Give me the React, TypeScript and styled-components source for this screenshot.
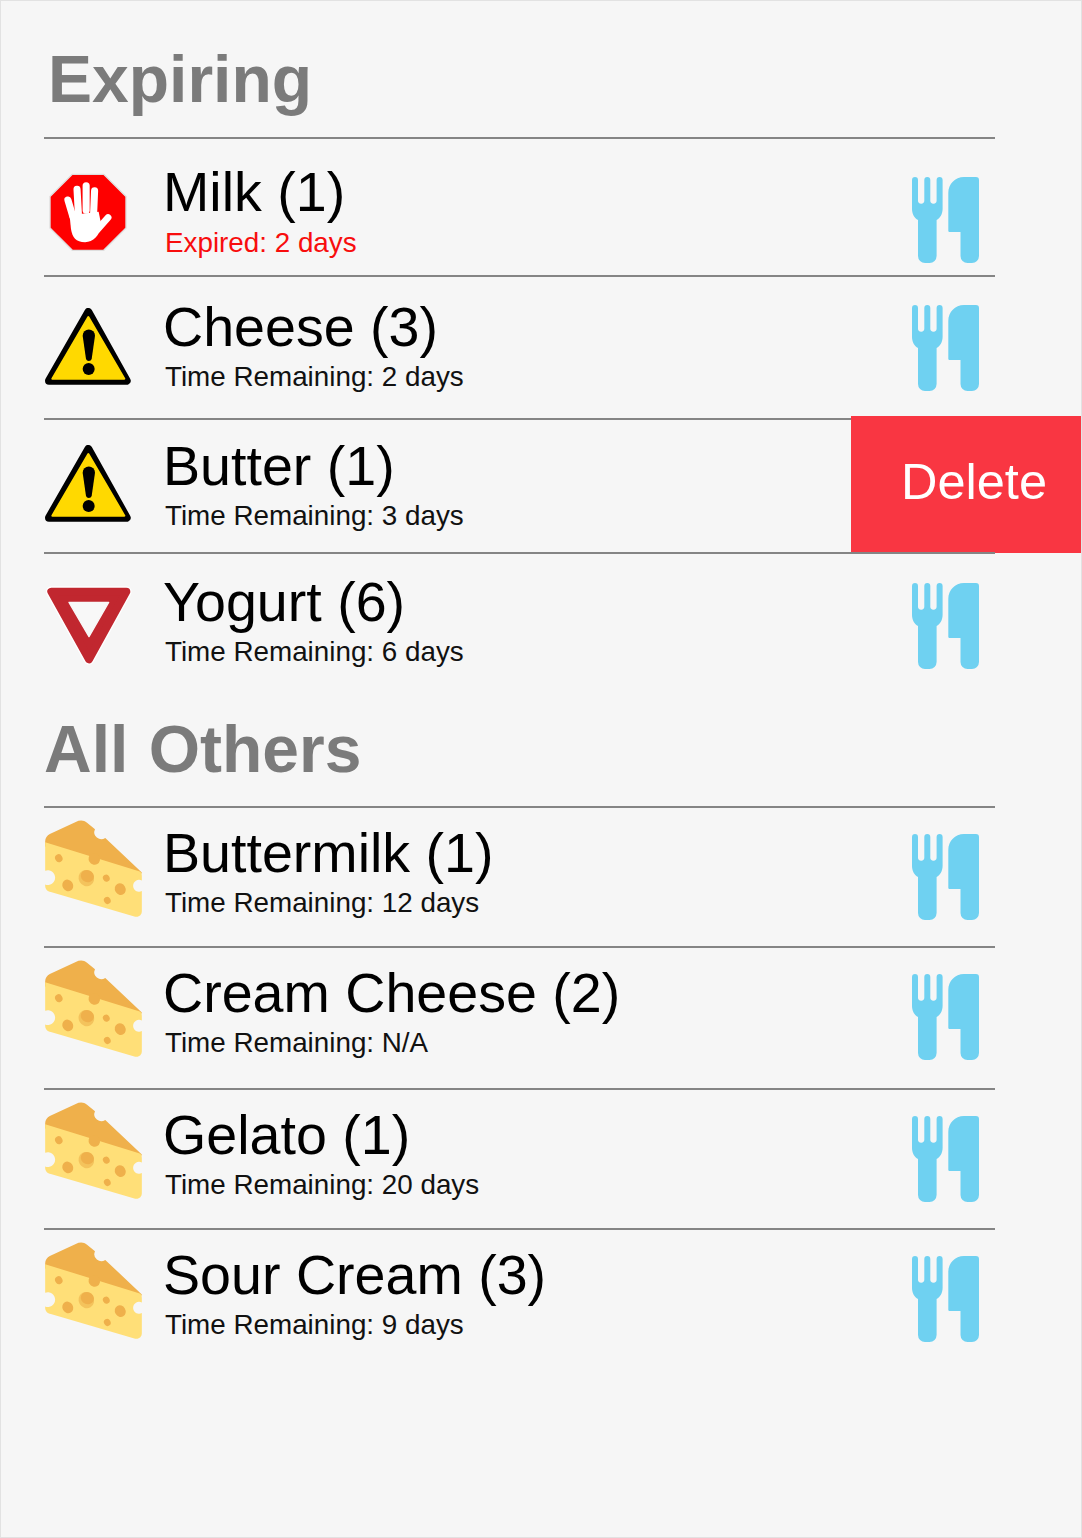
import { FC } from 'react'
import styled, { createGlobalStyle } from 'styled-components'

const GlobalStyle = createGlobalStyle`
  html, body {
    margin: 0;
    padding: 0;
    background: #f6f6f6;
  }
  * {
    box-sizing: border-box;
  }
`

const Page = styled.div`
  width: 1082px;
  height: 1538px;
  padding-left: 44px;
  background: #f6f6f6;
  border: 1px solid #e2e2e2;
  font-family: 'Liberation Sans', Arial, sans-serif;
  overflow: hidden;
`

const List = styled.div`
  width: 951px;
  margin-left: -1px;
`

const Heading = styled.h2<{ $height: number; $indent: number; $shift: number }>`
  height: ${(p) => p.$height}px;
  margin: 0;
  padding-left: ${(p) => p.$indent}px;
  padding-top: ${(p) => Math.max(p.$shift, 0)}px;
  padding-bottom: ${(p) => Math.max(-p.$shift, 0)}px;
  display: flex;
  align-items: center;
  font-size: 66px;
  font-weight: bold;
  word-spacing: 2px;
  color: #7b7b7b;
`

const Row = styled.div<{ $height: number }>`
  position: relative;
  height: ${(p) => p.$height}px;
  display: grid;
  grid-template-columns: 119px 1fr auto;
  padding-right: 15px;
  border-top: 2px solid #858585;
`

const IconSlot = styled.div<{ $top: number; $left: number }>`
  margin-top: ${(p) => p.$top}px;
  margin-left: ${(p) => p.$left}px;
`

const Texts = styled.div<{ $top: number }>`
  margin-top: ${(p) => p.$top}px;
`

const Name = styled.div`
  font-size: 55.6px;
  line-height: 66px;
  color: #000;
`

const Detail = styled.div<{ $expired?: boolean }>`
  padding-left: 2px;
  padding-top: ${(p) => (p.$expired ? 2 : 1)}px;
  font-size: 27.8px;
  line-height: 32px;
  color: ${(p) => (p.$expired ? '#f80d0d' : '#111')};
`

const Tool = styled.div<{ $top: number }>`
  margin-top: ${(p) => p.$top}px;
`

const DeleteButton = styled.button`
  position: absolute;
  top: -4px;
  left: 807px;
  width: 230px;
  height: 137px;
  border: 0;
  padding: 0 0 6px 16px;
  background: #f93642;
  color: #fff;
  font-family: inherit;
  font-size: 50.5px;
  text-align: center;
`

const Utensils: FC = () => (
  <svg width="68" height="86" viewBox="0 0 68 86" fill="#6fd1f1">
    <path d="M0 3a3 3 0 0 1 6 0v20.500a3 3 0 0 0 6.300 0V3a3 3 0 0 1 6 0v20.500a3 3 0 0 0 6.300 0V3a3 3 0 0 1 6 0v29c0 5-2.500 9-6 11v36a7 7 0 0 1-7 7H13a7 7 0 0 1-7-7V43c-3.500-2-6-6-6-11z" />
    <path d="M52 0h12a3 3 0 0 1 3 3v76a7 7 0 0 1-7 7h-4.500a7 7 0 0 1-7-7V55H37.500a1.200 1.200 0 0 1-1.200-1.200V16C36.300 7 43 0 52 0z" />
  </svg>
)

const StopIcon: FC = () => (
  <svg width="78" height="78" viewBox="58 40 231 231">
    <path d="M127 44h93l66 66v93l-66 66h-93l-66-66v-93z" fill="#fe0000" stroke="#dedede" strokeWidth="4" />
    <g stroke="#fff" strokeLinecap="round" fill="none">
      <path d="M114 120l15 50" strokeWidth="21" />
      <path d="M141 88l4 72" strokeWidth="21" />
      <path d="M168 78v72" strokeWidth="21" />
      <path d="M193 93l-3 70" strokeWidth="21" />
      <path d="M233 172l-32 36" strokeWidth="20" />
    </g>
    <path d="M119 165l86-10 8 40c-4 30-25 50-48 50-28 0-38-15-42-40z" fill="#fff" />
  </svg>
)

const WarningIcon: FC = () => (
  <svg width="86" height="80" viewBox="45 445 258 240">
    <path d="M175 457L290 663H57z" fill="#000" stroke="#000" strokeWidth="24" strokeLinejoin="round" />
    <path d="M175 472L283 657H67z" fill="#ffd900" stroke="#ffd900" strokeWidth="6" strokeLinejoin="round" />
    <path d="M158 528a18 18 0 0 1 37 0l-10 70a9 9 0 0 1-17 0z" />
    <circle cx="176" cy="628" r="18" />
  </svg>
)

const YieldIcon: FC = () => (
  <svg width="88" height="80" viewBox="43 50 264 240">
    <path d="M65 67H290L178 270z" fill="#fff" stroke="#fff" strokeWidth="32" strokeLinejoin="round" />
    <path d="M65 67H290L178 270z" fill="#c1272f" stroke="#c1272f" strokeWidth="24" strokeLinejoin="round" />
    <path d="M118 99H237L178 202z" fill="#f8f8f8" stroke="#f8f8f8" strokeWidth="4" strokeLinejoin="round" />
  </svg>
)

const CheeseIcon: FC = () => (
  <svg width="97" height="97" viewBox="45 28 291 292">
    <path d="M45 92c0-10 6-18 14-22l78-36c12-6 24-6 34 2l24 20a21 21 0 0 0 31 26l110 104-6 12-285-90z" fill="#efb04b" />
    <path d="M45 95l285 88c4 2 6 6 6 14v13a18 18 0 1 0 0 32v60c0 12-8 19-20 17L62 245c-10-3-17-8-17-20v-3a22 22 0 1 0 0-41z" fill="#ffdf78" />
    <g fill="#efb04b">
      <ellipse cx="193" cy="145" rx="17" ry="18" transform="rotate(-30 193 145)" />
      <ellipse cx="86" cy="143" rx="11" ry="12" transform="rotate(-30 86 143)" />
      <ellipse cx="113" cy="225" rx="16" ry="18" transform="rotate(-30 113 225)" />
      <ellipse cx="229" cy="203" rx="10" ry="11" transform="rotate(-30 229 203)" />
      <ellipse cx="271" cy="236" rx="16" ry="18" transform="rotate(-30 271 236)" />
      <ellipse cx="232" cy="270" rx="10" ry="11" transform="rotate(-30 232 270)" />
    </g>
    <ellipse cx="169" cy="203" rx="23" ry="25" fill="#f4c35c" transform="rotate(-30 169 203)" />
    <ellipse cx="172" cy="197" rx="20" ry="18" fill="#efb04b" transform="rotate(20 172 197)" />
  </svg>
)

type Item = {
  name: string
  detail: string
  expired?: boolean
  icon: FC
  height: number
  iconTop: number
  iconLeft: number
  textTop: number
  toolTop?: number
  deleting?: boolean
}

const expiring: Item[] = [
  { name: 'Milk (1)', detail: 'Expired: 2 days', expired: true, icon: StopIcon, height: 138, iconTop: 34, iconLeft: 5, textTop: 20, toolTop: 38 },
  { name: 'Cheese (3)', detail: 'Time Remaining: 2 days', icon: WarningIcon, height: 143, iconTop: 31, iconLeft: 1, textTop: 17, toolTop: 28 },
  { name: 'Butter (1)', detail: 'Time Remaining: 3 days', icon: WarningIcon, height: 134, iconTop: 25, iconLeft: 1, textTop: 13, deleting: true },
  { name: 'Yogurt (6)', detail: 'Time Remaining: 6 days', icon: YieldIcon, height: 149, iconTop: 32, iconLeft: 0, textTop: 15, toolTop: 29 },
]

const others: Item[] = [
  { name: 'Buttermilk (1)', detail: 'Time Remaining: 12 days', icon: CheeseIcon, height: 140, iconTop: 12, iconLeft: 1, textTop: 12, toolTop: 26 },
  { name: 'Cream Cheese (2)', detail: 'Time Remaining: N/A', icon: CheeseIcon, height: 142, iconTop: 12, iconLeft: 1, textTop: 12, toolTop: 26 },
  { name: 'Gelato (1)', detail: 'Time Remaining: 20 days', icon: CheeseIcon, height: 140, iconTop: 12, iconLeft: 1, textTop: 12, toolTop: 26 },
  { name: 'Sour Cream (3)', detail: 'Time Remaining: 9 days', icon: CheeseIcon, height: 140, iconTop: 12, iconLeft: 1, textTop: 12, toolTop: 26 },
]

const FoodRow: FC<{ item: Item }> = ({ item }) => {
  const Icon = item.icon
  return (
    <Row $height={item.height}>
      <IconSlot $top={item.iconTop} $left={item.iconLeft}>
        <Icon />
      </IconSlot>
      <Texts $top={item.textTop}>
        <Name>{item.name}</Name>
        <Detail $expired={item.expired}>{item.detail}</Detail>
      </Texts>
      {item.toolTop !== undefined && (
        <Tool $top={item.toolTop}>
          <Utensils />
        </Tool>
      )}
      {item.deleting && <DeleteButton>Delete</DeleteButton>}
    </Row>
  )
}

const App: FC = () => (
  <>
    <GlobalStyle />
    <Page>
      <List>
        <Heading $height={136} $indent={4} $shift={20}>Expiring</Heading>
        {expiring.map((item) => <FoodRow key={item.name} item={item} />)}
        <Heading $height={105} $indent={0} $shift={-10}>All Others</Heading>
        {others.map((item) => <FoodRow key={item.name} item={item} />)}
      </List>
    </Page>
  </>
)

export default App
